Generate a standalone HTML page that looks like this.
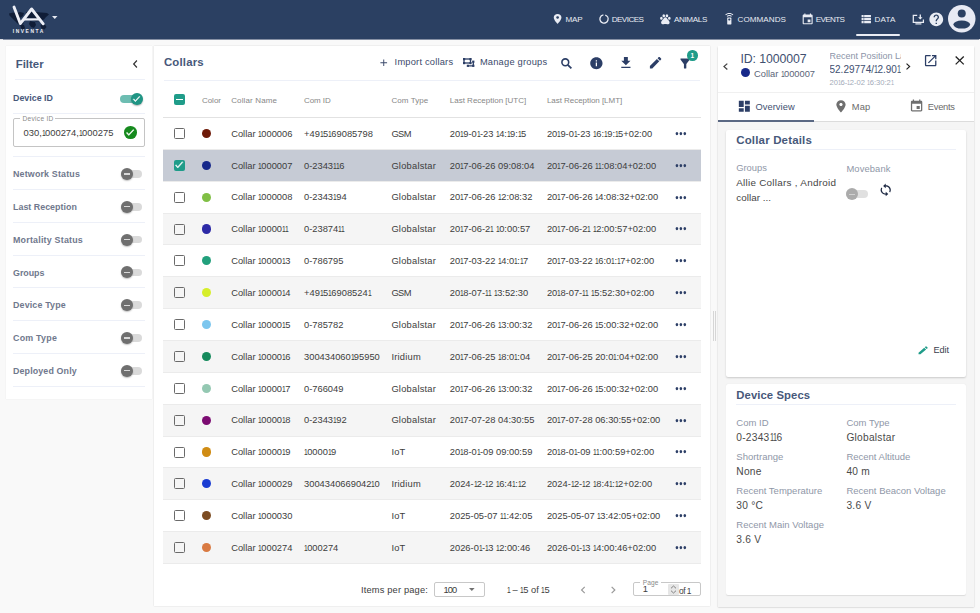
<!DOCTYPE html><html><head><meta charset="utf-8"><style>
html,body{margin:0;padding:0;}
body{width:980px;height:613px;position:relative;overflow:hidden;background:#f9f9f9;font-family:"Liberation Sans",sans-serif;}
.t{position:absolute;white-space:nowrap;line-height:1;}
.i{position:absolute;overflow:visible;}
.r{position:absolute;box-sizing:border-box;}
.o{display:inline-block;width:.338em;}
.o>span{display:inline-block;transform:scaleX(.72);transform-origin:-.02em 0;}
</style></head><body>
<div class="r" style="left:0px;top:0px;width:980px;height:38.6px;background:#2b4062;box-shadow:0 0.6px 0.8px rgba(20,40,80,0.5);"></div>
<svg class="i" style="left:0;top:0;width:70px;height:38px" viewBox="0 0 70 38"><g fill="#0e1a33" opacity="0.9"><path d="M9 13.5 L13 12.5 L17 13 L20 12 L24 13 L23 16 L20 18 L21 21 L24 23 L22 25 L18 24 L15 21 L12 18 L9.5 15.5Z"/><path d="M26 12 L31 11.5 L36 12 L41 12.5 L47 13 L49 14.5 L46 17 L44 19.5 L40 21 L36 21.5 L32 20 L28 19 L26 16Z"/><path d="M20 24 L24 25 L25 28 L23 30.5 L21 28Z"/><path d="M30 21 L35 22 L36 25 L34 28 L31 27 L29 24Z"/><path d="M41 24 L45 24.5 L46.5 27 L44.5 29.5 L41.5 28.5 L40.5 26Z"/></g><path fill="none" stroke="#eceef6" stroke-width="2.9" stroke-linejoin="round" stroke-linecap="round" d="M14 7 L20.3 23.6 L31.6 9 L43.2 23.8"/><path fill="none" stroke="#eceef6" stroke-width="2.2" d="M23.2 19.4 L39.4 19.4"/><polygon fill="#e6e9f2" points="52,16 57.5,16 54.75,19"/></svg>
<div class="t" style="left:12.80px;top:30.45px;font-size:4.9px;color:#eef0f6;font-weight:bold;letter-spacing:1.551px;">INVENTA</div>
<svg class="i" style="left:551.05px;top:13.22px;width:13.20px;height:11.76px;" viewBox="0 0 24 24" preserveAspectRatio="none"><path fill="#e9ecf4"   d="M12 2C8.13 2 5 5.13 5 9c0 5.25 7 13 7 13s7-7.75 7-13c0-3.87-3.13-7-7-7zm0 9.5c-1.38 0-2.5-1.12-2.5-2.5s1.12-2.5 2.5-2.5 2.5 1.12 2.5 2.5-1.12 2.5-2.5 2.5z"/></svg>
<div class="t" style="left:565.60px;top:16.34px;font-size:8.1px;color:#e9ecf4;letter-spacing:-0.284px;">MAP</div>
<svg class="i" style="left:598.7px;top:13.8px;width:10px;height:10px" viewBox="0 0 10 10"><circle cx="5" cy="5" r="4.1" fill="none" stroke="#e9ecf4" stroke-width="1.3" stroke-dasharray="23.2 2.56" transform="rotate(-72 5 5)"/></svg>
<div class="t" style="left:611.70px;top:16.34px;font-size:8.1px;color:#e9ecf4;letter-spacing:-0.537px;">DEVICES</div>
<svg class="i" style="left:659.34px;top:10.57px;width:12.72px;height:14.55px;" viewBox="0 0 24 24" preserveAspectRatio="none"><path fill="#e9ecf4"   d="M4.5 12m-2.5 0a2.5 2.5 0 1 0 5 0 2.5 2.5 0 1 0-5 0M9 8m-2.5 0a2.5 2.5 0 1 0 5 0 2.5 2.5 0 1 0-5 0M15 8m-2.5 0a2.5 2.5 0 1 0 5 0 2.5 2.5 0 1 0-5 0M19.5 12m-2.5 0a2.5 2.5 0 1 0 5 0 2.5 2.5 0 1 0-5 0M17.34 14.86c-.87-1.02-1.6-1.89-2.48-2.91-.46-.54-1.05-1.08-1.75-1.32-.11-.04-.22-.07-.33-.09-.25-.04-.52-.04-.78-.04s-.53 0-.79.05c-.11.02-.22.05-.33.09-.7.24-1.28.78-1.75 1.32-.87 1.02-1.6 1.890-2.48 2.910-1.31 1.31-2.92 2.76-2.62 4.79.29 1.02 1.02 2.03 2.33 2.32.73.15 3.060-.44 5.540-.44h.18c2.48 0 4.81.58 5.54.44 1.31-.29 2.04-1.31 2.33-2.32.31-2.04-1.3-3.49-2.61-4.8z"/></svg>
<div class="t" style="left:673.90px;top:16.34px;font-size:8.1px;color:#e9ecf4;letter-spacing:-0.337px;">ANIMALS</div>
<svg class="i" style="left:723.19px;top:12.90px;width:12.62px;height:11.90px;" viewBox="0 0 24 24" preserveAspectRatio="none"><path fill="#e9ecf4"   d="M15 9H9c-.55 0-1 .45-1 1v12c0 .55.45 1 1 1h6c.55 0 1-.45 1-1V10c0-.55-.45-1-1-1zm-3 6c-1.1 0-2-.9-2-2s.9-2 2-2 2 .9 2 2-.9 2-2 2zM7.05 6.050l1.41 1.41C9.37 6.56 10.62 6 12 6s2.630.56 3.54 1.46l1.41-1.41C15.68 4.78 13.93 4 12 4s-3.68.78-4.95 2.05zM12 0C8.96 0 6.21 1.23 4.22 3.22l1.41 1.41C7.26 3.01 9.51 2 12 2s4.74 1.01 6.36 2.64l1.41-1.41C17.79 1.23 15.04 0 12 0z"/></svg>
<div class="t" style="left:737.60px;top:16.34px;font-size:8.1px;color:#e9ecf4;letter-spacing:0.031px;">COMMANDS</div>
<svg class="i" style="left:801.23px;top:12.66px;width:13.33px;height:12.96px;" viewBox="0 0 24 24" preserveAspectRatio="none"><path fill="#e9ecf4"   d="M17 12h-5v5h5v-5zM16 1v2H8V1H6v2H5c-1.11 0-1.99.9-1.99 2L3 19c0 1.1.89 2 2 2h14c1.1 0 2-.9 2-2V5c0-1.1-.9-2-2-2h-1V1h-2zm3 18H5V8h14v11z"/></svg>
<div class="t" style="left:815.80px;top:16.34px;font-size:8.1px;color:#e9ecf4;letter-spacing:-0.635px;">EVENTS</div>
<svg class="i" style="left:860.43px;top:11.74px;width:12.53px;height:14.23px;" viewBox="0 0 24 24" preserveAspectRatio="none"><path fill="#e9ecf4"   d="M3 14h4v-4H3v4zm0 5h4v-4H3v4zM3 9h4V5H3v4zm5 5h13v-4H8v4zm0 5h13v-4H8v4zM8 5v4h13V5H8z"/></svg>
<div class="t" style="left:874.60px;top:16.34px;font-size:8.1px;color:#e9ecf4;letter-spacing:0.100px;">DATA</div>
<div class="r" style="left:856px;top:34px;width:44px;height:2px;background:#e9ecf4;border-radius:1px;"></div>
<svg class="i" style="left:912px;top:14px;width:13px;height:11px" viewBox="0 0 13 11"><path d="M5.2 1.3 H1.3 V8.3 H11.4 V5.6" fill="none" stroke="#e9ecf4" stroke-width="1.25"/><path d="M3.4 9.9 H9.4" stroke="#e9ecf4" stroke-width="1.2"/><path d="M8.3 0.6 V4.4" stroke="#e9ecf4" stroke-width="1.3"/><path d="M6.1 3.2 L8.3 5.6 L10.5 3.2Z" fill="#e9ecf4"/></svg>
<svg class="i" style="left:928.12px;top:10.92px;width:16.56px;height:16.56px;" viewBox="0 0 24 24" preserveAspectRatio="none"><path fill="#e9ecf4"   d="M12 2C6.48 2 2 6.48 2 12s4.48 10 10 10 10-4.48 10-10S17.52 2 12 2zm1 17h-2v-2h2v2zm2.07-7.75l-.9.92C13.45 12.9 13 13.5 13 15h-2v-.5c0-1.1.45-2.1 1.17-2.83l1.24-1.26c.37-.36.59-.86.59-1.41 0-1.1-.9-2-2-2s-2 .9-2 2H8c0-2.21 1.79-4 4-4s4 1.790 4 4c0 .88-.36 1.68-.93 2.25z"/></svg>
<svg class="i" style="left:947.5px;top:5.4px;width:27.5px;height:27.5px" viewBox="0 0 28 28"><circle cx="14" cy="14" r="14" fill="#e8eaf4"/><circle cx="14" cy="8.6" r="4.1" fill="#2b4062"/><ellipse cx="14" cy="19.9" rx="8.5" ry="4.1" fill="#2b4062"/></svg>
<div class="r" style="left:6px;top:45.8px;width:146.4px;height:352.9px;background:#fff;box-shadow:0 0 1px rgba(0,0,0,0.1);"></div>
<div class="t" style="left:15.70px;top:58.75px;font-size:11.4px;color:#47587a;font-weight:bold;letter-spacing:0.022px;">Filter</div>
<svg class="i" style="left:127.64px;top:55.50px;width:14.57px;height:16.00px;" viewBox="0 0 24 24" preserveAspectRatio="none"><path fill="#333"   d="M15.41 7.41L14 6l-6 6 6 6 1.41-1.41L10.83 12z"/></svg>
<div class="r" style="left:15px;top:79px;width:130px;height:1px;background:#edf0f8;"></div>
<div class="t" style="left:13.00px;top:94.07px;font-size:8.9px;color:#47587a;font-weight:bold;letter-spacing:-0.008px;">Device ID</div>
<div class="r" style="left:120.4px;top:95px;width:17.900000000000006px;height:7.599999999999994px;background:#6dbdb2;border-radius:4px;"></div>
<div class="r" style="left:131px;top:92.8px;width:11.8px;height:11.8px;border-radius:50%;background:#1f9584;box-shadow:0 1px 1.5px rgba(0,0,0,0.3);"></div>
<svg class="i" style="left:132.32px;top:93.75px;width:9.01px;height:9.66px;" viewBox="0 0 24 24" preserveAspectRatio="none"><path fill="#fff"  stroke="#fff" stroke-width="1.2" stroke-linejoin="round" d="M9 16.17L4.83 12l-1.42 1.41L9 19 21 7l-1.41-1.41z"/></svg>
<div class="r" style="left:13px;top:113px;width:132px;height:1px;background:#edf0f8;"></div>
<div class="r" style="left:13px;top:118.4px;width:131.5px;height:28.3px;border:1px solid #c4c4c4;border-radius:2px;"></div>
<div class="r" style="left:20.3px;top:116px;width:34.8px;height:5px;background:#fff;"></div>
<div class="t" style="left:22.60px;top:115.61px;font-size:6.6px;color:#8a8a8a;letter-spacing:0.266px;">Device ID</div>
<div class="t" style="left:23.60px;top:127.64px;font-size:9.4px;color:#3d3d3d;">030,<span class="o"><span>1</span></span>000274,<span class="o"><span>1</span></span>000275</div>
<div class="r" style="left:124px;top:126.4px;width:12.6px;height:12.6px;border-radius:50%;background:#168a1e;"></div>
<svg class="i" style="left:125.17px;top:127.30px;width:10.10px;height:10.74px;" viewBox="0 0 24 24" preserveAspectRatio="none"><path fill="#fff"  stroke="#fff" stroke-width="1.2" stroke-linejoin="round" d="M9 16.17L4.83 12l-1.42 1.41L9 19 21 7l-1.41-1.41z"/></svg>
<div class="r" style="left:13px;top:156px;width:132px;height:1px;background:#edf0f8;"></div>
<div class="t" style="left:13.00px;top:170.27px;font-size:8.9px;color:#70788d;font-weight:bold;letter-spacing:0.173px;">Network Status</div>
<div class="r" style="left:121px;top:170.2px;width:21.19999999999999px;height:7.600000000000023px;background:#dadada;border-radius:4px;"></div>
<div class="r" style="left:120.7px;top:168.0px;width:12px;height:12px;border-radius:50%;background:#6f6f6f;box-shadow:0 1px 1.5px rgba(0,0,0,0.25);"></div>
<div class="r" style="left:123.7px;top:173.4px;width:5.999999999999986px;height:1.1999999999999886px;background:#d8d8d8;"></div>
<div class="r" style="left:13px;top:189px;width:132px;height:1px;background:#edf0f8;"></div>
<div class="t" style="left:13.00px;top:203.07px;font-size:8.9px;color:#70788d;font-weight:bold;letter-spacing:0.015px;">Last Reception</div>
<div class="r" style="left:121px;top:203.0px;width:21.19999999999999px;height:7.600000000000023px;background:#dadada;border-radius:4px;"></div>
<div class="r" style="left:120.7px;top:200.8px;width:12px;height:12px;border-radius:50%;background:#6f6f6f;box-shadow:0 1px 1.5px rgba(0,0,0,0.25);"></div>
<div class="r" style="left:123.7px;top:206.20000000000002px;width:5.999999999999986px;height:1.1999999999999886px;background:#d8d8d8;"></div>
<div class="r" style="left:13px;top:221.8px;width:132px;height:1.0px;background:#edf0f8;"></div>
<div class="t" style="left:13.00px;top:235.87px;font-size:8.9px;color:#70788d;font-weight:bold;letter-spacing:0.215px;">Mortality Status</div>
<div class="r" style="left:121px;top:235.79999999999998px;width:21.19999999999999px;height:7.600000000000023px;background:#dadada;border-radius:4px;"></div>
<div class="r" style="left:120.7px;top:233.6px;width:12px;height:12px;border-radius:50%;background:#6f6f6f;box-shadow:0 1px 1.5px rgba(0,0,0,0.25);"></div>
<div class="r" style="left:123.7px;top:239.0px;width:5.999999999999986px;height:1.1999999999999886px;background:#d8d8d8;"></div>
<div class="r" style="left:13px;top:254.6px;width:132px;height:1.0px;background:#edf0f8;"></div>
<div class="t" style="left:13.00px;top:268.67px;font-size:8.9px;color:#70788d;font-weight:bold;letter-spacing:-0.024px;">Groups</div>
<div class="r" style="left:121px;top:268.59999999999997px;width:21.19999999999999px;height:7.600000000000023px;background:#dadada;border-radius:4px;"></div>
<div class="r" style="left:120.7px;top:266.4px;width:12px;height:12px;border-radius:50%;background:#6f6f6f;box-shadow:0 1px 1.5px rgba(0,0,0,0.25);"></div>
<div class="r" style="left:123.7px;top:271.79999999999995px;width:5.999999999999986px;height:1.2000000000000455px;background:#d8d8d8;"></div>
<div class="r" style="left:13px;top:287.4px;width:132px;height:1.0px;background:#edf0f8;"></div>
<div class="t" style="left:13.00px;top:301.47px;font-size:8.9px;color:#70788d;font-weight:bold;letter-spacing:0.156px;">Device Type</div>
<div class="r" style="left:121px;top:301.4px;width:21.19999999999999px;height:7.600000000000023px;background:#dadada;border-radius:4px;"></div>
<div class="r" style="left:120.7px;top:299.2px;width:12px;height:12px;border-radius:50%;background:#6f6f6f;box-shadow:0 1px 1.5px rgba(0,0,0,0.25);"></div>
<div class="r" style="left:123.7px;top:304.59999999999997px;width:5.999999999999986px;height:1.2000000000000455px;background:#d8d8d8;"></div>
<div class="r" style="left:13px;top:320.2px;width:132px;height:1.0px;background:#edf0f8;"></div>
<div class="t" style="left:13.00px;top:334.27px;font-size:8.9px;color:#70788d;font-weight:bold;letter-spacing:0.230px;">Com Type</div>
<div class="r" style="left:121px;top:334.2px;width:21.19999999999999px;height:7.600000000000023px;background:#dadada;border-radius:4px;"></div>
<div class="r" style="left:120.7px;top:332.0px;width:12px;height:12px;border-radius:50%;background:#6f6f6f;box-shadow:0 1px 1.5px rgba(0,0,0,0.25);"></div>
<div class="r" style="left:123.7px;top:337.4px;width:5.999999999999986px;height:1.2000000000000455px;background:#d8d8d8;"></div>
<div class="r" style="left:13px;top:353px;width:132px;height:1px;background:#edf0f8;"></div>
<div class="t" style="left:13.00px;top:367.07px;font-size:8.9px;color:#70788d;font-weight:bold;letter-spacing:0.130px;">Deployed Only</div>
<div class="r" style="left:121px;top:367.0px;width:21.19999999999999px;height:7.600000000000023px;background:#dadada;border-radius:4px;"></div>
<div class="r" style="left:120.7px;top:364.8px;width:12px;height:12px;border-radius:50%;background:#6f6f6f;box-shadow:0 1px 1.5px rgba(0,0,0,0.25);"></div>
<div class="r" style="left:123.7px;top:370.2px;width:5.999999999999986px;height:1.2000000000000455px;background:#d8d8d8;"></div>
<div class="r" style="left:13px;top:385.8px;width:132px;height:1.0px;background:#edf0f8;"></div>
<div class="r" style="left:153.9px;top:45.8px;width:556.0px;height:560.5px;background:#fff;box-shadow:0 0 1.2px rgba(0,0,0,0.2);"></div>
<div class="t" style="left:163.90px;top:56.75px;font-size:11.4px;color:#47587a;font-weight:bold;letter-spacing:0.193px;">Collars</div>
<svg class="i" style="left:378.31px;top:56.61px;width:11.49px;height:11.49px;" viewBox="0 0 24 24" preserveAspectRatio="none"><path fill="#3b4a6b"   d="M19 13h-6v6h-2v-6H5v-2h6V5h2v6h6v2z"/></svg>
<div class="t" style="left:394.60px;top:57.83px;font-size:9.3px;color:#3b4a6b;letter-spacing:0.206px;">Import collars</div>
<svg class="i" style="left:458px;top:52px;width:24px;height:20px" viewBox="0 0 24 20"><g fill="none" stroke="#2c3e66" stroke-width="1.3"><rect x="6" y="7" width="6.5" height="4"/><path d="M15.3 9.2 V13.8 H9.8"/></g><g fill="#2c3e66"><rect x="5" y="6" width="2.2" height="2.2"/><rect x="11.4" y="6" width="2.2" height="2.2"/><rect x="5" y="10" width="2.2" height="2.2"/><rect x="11.4" y="10" width="2.2" height="2.2"/><rect x="14.2" y="8.6" width="2.2" height="2.2"/><rect x="14.2" y="12.7" width="2.2" height="2.2"/><rect x="8.8" y="12.7" width="2.2" height="2.2"/></g></svg>
<div class="t" style="left:479.90px;top:57.83px;font-size:9.3px;color:#3b4a6b;letter-spacing:0.214px;">Manage groups</div>
<svg class="i" style="left:561.4px;top:57.6px;width:11.2px;height:11px" viewBox="0 0 11.2 11"><circle cx="4.3" cy="4.3" r="3.4" fill="none" stroke="#2c3e66" stroke-width="1.6"/><path d="M6.8 6.8 L10.4 10.3" stroke="#2c3e66" stroke-width="1.8"/></svg>
<svg class="i" style="left:589.27px;top:55.80px;width:14.76px;height:14.40px;" viewBox="0 0 24 24" preserveAspectRatio="none"><path fill="#2c3e66"   d="M12 2C6.48 2 2 6.48 2 12s4.48 10 10 10 10-4.48 10-10S17.52 2 12 2zm1 15h-2v-6h2v6zm0-8h-2V7h2v2z"/></svg>
<svg class="i" style="left:618.31px;top:55.06px;width:15.77px;height:15.53px;" viewBox="0 0 24 24" preserveAspectRatio="none"><path fill="#2c3e66"   d="M19 9h-4V3H9v6H5l7 7 7-7zM5 18v2h14v-2H5z"/></svg>
<svg class="i" style="left:647.70px;top:55.08px;width:15.20px;height:15.33px;" viewBox="0 0 24 24" preserveAspectRatio="none"><path fill="#2c3e66"   d="M3 17.25V21h3.75L17.81 9.94l-3.75-3.75L3 17.25zM20.71 7.04c.39-.39.39-1.02 0-1.41l-2.34-2.34c-.39-.39-1.02-.39-1.41 0l-1.83 1.83 3.75 3.75 1.83-1.83z"/></svg>
<svg class="i" style="left:677.92px;top:55.50px;width:14.25px;height:15.00px;" viewBox="0 0 24 24" preserveAspectRatio="none"><path fill="#2c3e66"   d="M4.25 5.61C6.27 8.2 10 13 10 13v6c0 .55.45 1 1 1h2c.55 0 1-.45 1-1v-6s3.72-4.8 5.74-7.39c.51-.66.04-1.61-.79-1.61H5.04c-.83 0-1.3.95-.79 1.61z"/></svg>
<div class="r" style="left:687.2px;top:50.3px;width:10.4px;height:10.4px;border-radius:50%;background:#1f9c89;"></div>
<div class="t" style="left:690.40px;top:52.70px;font-size:6.5px;color:#fff;font-weight:bold;">1</div>
<div class="r" style="left:164px;top:80px;width:536px;height:1px;background:#edf0f8;"></div>
<div class="r" style="left:174.1px;top:94.3px;width:10.8px;height:11px;border-radius:2px;background:#1f9c89;"></div>
<div class="r" style="left:175.9px;top:99.3px;width:7.199999999999989px;height:1.2000000000000028px;background:#fff;"></div>
<div class="t" style="left:201.90px;top:96.53px;font-size:8px;color:#878787;letter-spacing:-0.003px;">Color</div>
<div class="t" style="left:231.20px;top:96.53px;font-size:8px;color:#878787;letter-spacing:0.131px;">Collar Name</div>
<div class="t" style="left:304.00px;top:96.53px;font-size:8px;color:#878787;letter-spacing:-0.069px;">Com ID</div>
<div class="t" style="left:391.40px;top:96.53px;font-size:8px;color:#878787;letter-spacing:0.086px;">Com Type</div>
<div class="t" style="left:449.80px;top:96.53px;font-size:8px;color:#878787;letter-spacing:-0.004px;">Last Reception [UTC]</div>
<div class="t" style="left:546.90px;top:96.53px;font-size:8px;color:#878787;letter-spacing:-0.037px;">Last Reception [LMT]</div>
<div class="r" style="left:162.5px;top:117px;width:538.5px;height:1px;background:#e2e2e2;"></div>
<div class="r" style="left:162.5px;top:148.86px;width:538.5px;height:1.0px;background:#ebebeb;"></div>
<div class="r" style="left:174.1px;top:127.93px;width:10.8px;height:11px;border-radius:1.5px;border:1.4px solid #6a6a6a;"></div>
<div class="r" style="left:202.2px;top:128.83px;width:9.2px;height:9.2px;border-radius:50%;background:#6e1a08;"></div>
<div class="t" style="left:231.20px;top:129.73px;font-size:9.33px;color:#3d3d3d;">Collar <span class="o"><span>1</span></span>000006</div>
<div class="t" style="left:304.00px;top:129.73px;font-size:9.33px;color:#3d3d3d;">+49<span class="o"><span>1</span></span>5<span class="o"><span>1</span></span>69085798</div>
<div class="t" style="left:391.40px;top:129.73px;font-size:9.33px;color:#3d3d3d;letter-spacing:-0.6px;">GSM</div>
<div class="t" style="left:449.80px;top:129.73px;font-size:9.33px;color:#3d3d3d;">20<span class="o"><span>1</span></span>9-0<span class="o"><span>1</span></span>-23 <span class="o"><span>1</span></span>4:<span class="o"><span>1</span></span>9:<span class="o"><span>1</span></span>5</div>
<div class="t" style="left:546.90px;top:129.73px;font-size:9.33px;color:#3d3d3d;">20<span class="o"><span>1</span></span>9-0<span class="o"><span>1</span></span>-23 <span class="o"><span>1</span></span>6:<span class="o"><span>1</span></span>9:<span class="o"><span>1</span></span>5+02:00</div>
<svg class="i" style="left:673.38px;top:123.83px;width:15.75px;height:19.20px;" viewBox="0 0 24 24" preserveAspectRatio="none"><path fill="#2c3e66"   d="M6 10c-1.1 0-2 .9-2 2s.9 2 2 2 2-.9 2-2-.9-2-2-2zm12 0c-1.1 0-2 .9-2 2s.9 2 2 2 2-.9 2-2-.9-2-2-2zm-6 0c-1.1 0-2 .9-2 2s.9 2 2 2 2-.9 2-2-.9-2-2-2z"/></svg>
<div class="r" style="left:162.5px;top:149.86px;width:538.5px;height:31.360000000000014px;background:#c6cbd5;"></div>
<div class="r" style="left:162.5px;top:180.72000000000003px;width:538.5px;height:1.0px;background:#ebebeb;"></div>
<div class="r" style="left:174.1px;top:159.79px;width:10.8px;height:11px;border-radius:2px;background:#1f9c89;"></div>
<svg class="i" style="left:174.37px;top:159.42px;width:10.10px;height:11.45px;" viewBox="0 0 24 24" preserveAspectRatio="none"><path fill="#fff"  stroke="#fff" stroke-width="1.1" stroke-linejoin="round" d="M9 16.17L4.83 12l-1.42 1.41L9 19 21 7l-1.41-1.41z"/></svg>
<div class="r" style="left:202.2px;top:160.69px;width:9.2px;height:9.2px;border-radius:50%;background:#16288a;"></div>
<div class="t" style="left:231.20px;top:161.59px;font-size:9.33px;color:#3d3d3d;">Collar <span class="o"><span>1</span></span>000007</div>
<div class="t" style="left:304.00px;top:161.59px;font-size:9.33px;color:#3d3d3d;">0-2343<span class="o"><span>1</span></span><span class="o"><span>1</span></span>6</div>
<div class="t" style="left:391.40px;top:161.59px;font-size:9.33px;color:#3d3d3d;letter-spacing:0.22px;">Globalstar</div>
<div class="t" style="left:449.80px;top:161.59px;font-size:9.33px;color:#3d3d3d;">20<span class="o"><span>1</span></span>7-06-26 09:08:04</div>
<div class="t" style="left:546.90px;top:161.59px;font-size:9.33px;color:#3d3d3d;">20<span class="o"><span>1</span></span>7-06-26 <span class="o"><span>1</span></span><span class="o"><span>1</span></span>:08:04+02:00</div>
<svg class="i" style="left:673.38px;top:155.69px;width:15.75px;height:19.20px;" viewBox="0 0 24 24" preserveAspectRatio="none"><path fill="#2c3e66"   d="M6 10c-1.1 0-2 .9-2 2s.9 2 2 2 2-.9 2-2-.9-2-2-2zm12 0c-1.1 0-2 .9-2 2s.9 2 2 2 2-.9 2-2-.9-2-2-2zm-6 0c-1.1 0-2 .9-2 2s.9 2 2 2 2-.9 2-2-.9-2-2-2z"/></svg>
<div class="r" style="left:162.5px;top:212.57999999999998px;width:538.5px;height:1.0px;background:#ebebeb;"></div>
<div class="r" style="left:174.1px;top:191.65px;width:10.8px;height:11px;border-radius:1.5px;border:1.4px solid #6a6a6a;"></div>
<div class="r" style="left:202.2px;top:192.55px;width:9.2px;height:9.2px;border-radius:50%;background:#80bf45;"></div>
<div class="t" style="left:231.20px;top:193.45px;font-size:9.33px;color:#3d3d3d;">Collar <span class="o"><span>1</span></span>000008</div>
<div class="t" style="left:304.00px;top:193.45px;font-size:9.33px;color:#3d3d3d;">0-2343<span class="o"><span>1</span></span>94</div>
<div class="t" style="left:391.40px;top:193.45px;font-size:9.33px;color:#3d3d3d;letter-spacing:0.22px;">Globalstar</div>
<div class="t" style="left:449.80px;top:193.45px;font-size:9.33px;color:#3d3d3d;">20<span class="o"><span>1</span></span>7-06-26 <span class="o"><span>1</span></span>2:08:32</div>
<div class="t" style="left:546.90px;top:193.45px;font-size:9.33px;color:#3d3d3d;">20<span class="o"><span>1</span></span>7-06-26 <span class="o"><span>1</span></span>4:08:32+02:00</div>
<svg class="i" style="left:673.38px;top:187.55px;width:15.75px;height:19.20px;" viewBox="0 0 24 24" preserveAspectRatio="none"><path fill="#2c3e66"   d="M6 10c-1.1 0-2 .9-2 2s.9 2 2 2 2-.9 2-2-.9-2-2-2zm12 0c-1.1 0-2 .9-2 2s.9 2 2 2 2-.9 2-2-.9-2-2-2zm-6 0c-1.1 0-2 .9-2 2s.9 2 2 2 2-.9 2-2-.9-2-2-2z"/></svg>
<div class="r" style="left:162.5px;top:213.57999999999998px;width:538.5px;height:31.360000000000014px;background:#f5f5f5;"></div>
<div class="r" style="left:162.5px;top:244.44px;width:538.5px;height:1.0px;background:#ebebeb;"></div>
<div class="r" style="left:174.1px;top:223.51px;width:10.8px;height:11px;border-radius:1.5px;border:1.4px solid #6a6a6a;"></div>
<div class="r" style="left:202.2px;top:224.41px;width:9.2px;height:9.2px;border-radius:50%;background:#2d2aa6;"></div>
<div class="t" style="left:231.20px;top:225.31px;font-size:9.33px;color:#3d3d3d;">Collar <span class="o"><span>1</span></span>0000<span class="o"><span>1</span></span><span class="o"><span>1</span></span></div>
<div class="t" style="left:304.00px;top:225.31px;font-size:9.33px;color:#3d3d3d;">0-23874<span class="o"><span>1</span></span><span class="o"><span>1</span></span></div>
<div class="t" style="left:391.40px;top:225.31px;font-size:9.33px;color:#3d3d3d;letter-spacing:0.22px;">Globalstar</div>
<div class="t" style="left:449.80px;top:225.31px;font-size:9.33px;color:#3d3d3d;">20<span class="o"><span>1</span></span>7-06-2<span class="o"><span>1</span></span> <span class="o"><span>1</span></span>0:00:57</div>
<div class="t" style="left:546.90px;top:225.31px;font-size:9.33px;color:#3d3d3d;">20<span class="o"><span>1</span></span>7-06-2<span class="o"><span>1</span></span> <span class="o"><span>1</span></span>2:00:57+02:00</div>
<svg class="i" style="left:673.38px;top:219.41px;width:15.75px;height:19.20px;" viewBox="0 0 24 24" preserveAspectRatio="none"><path fill="#2c3e66"   d="M6 10c-1.1 0-2 .9-2 2s.9 2 2 2 2-.9 2-2-.9-2-2-2zm12 0c-1.1 0-2 .9-2 2s.9 2 2 2 2-.9 2-2-.9-2-2-2zm-6 0c-1.1 0-2 .9-2 2s.9 2 2 2 2-.9 2-2-.9-2-2-2z"/></svg>
<div class="r" style="left:162.5px;top:276.3px;width:538.5px;height:1.0px;background:#ebebeb;"></div>
<div class="r" style="left:174.1px;top:255.37px;width:10.8px;height:11px;border-radius:1.5px;border:1.4px solid #6a6a6a;"></div>
<div class="r" style="left:202.2px;top:256.27px;width:9.2px;height:9.2px;border-radius:50%;background:#22a07c;"></div>
<div class="t" style="left:231.20px;top:257.17px;font-size:9.33px;color:#3d3d3d;">Collar <span class="o"><span>1</span></span>0000<span class="o"><span>1</span></span>3</div>
<div class="t" style="left:304.00px;top:257.17px;font-size:9.33px;color:#3d3d3d;">0-786795</div>
<div class="t" style="left:391.40px;top:257.17px;font-size:9.33px;color:#3d3d3d;letter-spacing:0.22px;">Globalstar</div>
<div class="t" style="left:449.80px;top:257.17px;font-size:9.33px;color:#3d3d3d;">20<span class="o"><span>1</span></span>7-03-22 <span class="o"><span>1</span></span>4:0<span class="o"><span>1</span></span>:<span class="o"><span>1</span></span>7</div>
<div class="t" style="left:546.90px;top:257.17px;font-size:9.33px;color:#3d3d3d;">20<span class="o"><span>1</span></span>7-03-22 <span class="o"><span>1</span></span>6:0<span class="o"><span>1</span></span>:<span class="o"><span>1</span></span>7+02:00</div>
<svg class="i" style="left:673.38px;top:251.27px;width:15.75px;height:19.20px;" viewBox="0 0 24 24" preserveAspectRatio="none"><path fill="#2c3e66"   d="M6 10c-1.1 0-2 .9-2 2s.9 2 2 2 2-.9 2-2-.9-2-2-2zm12 0c-1.1 0-2 .9-2 2s.9 2 2 2 2-.9 2-2-.9-2-2-2zm-6 0c-1.1 0-2 .9-2 2s.9 2 2 2 2-.9 2-2-.9-2-2-2z"/></svg>
<div class="r" style="left:162.5px;top:277.3px;width:538.5px;height:31.360000000000014px;background:#f5f5f5;"></div>
<div class="r" style="left:162.5px;top:308.16px;width:538.5px;height:1.0px;background:#ebebeb;"></div>
<div class="r" style="left:174.1px;top:287.23px;width:10.8px;height:11px;border-radius:1.5px;border:1.4px solid #6a6a6a;"></div>
<div class="r" style="left:202.2px;top:288.13px;width:9.2px;height:9.2px;border-radius:50%;background:#d6ee2a;"></div>
<div class="t" style="left:231.20px;top:289.03px;font-size:9.33px;color:#3d3d3d;">Collar <span class="o"><span>1</span></span>0000<span class="o"><span>1</span></span>4</div>
<div class="t" style="left:304.00px;top:289.03px;font-size:9.33px;color:#3d3d3d;">+49<span class="o"><span>1</span></span>5<span class="o"><span>1</span></span>6908524<span class="o"><span>1</span></span></div>
<div class="t" style="left:391.40px;top:289.03px;font-size:9.33px;color:#3d3d3d;letter-spacing:-0.6px;">GSM</div>
<div class="t" style="left:449.80px;top:289.03px;font-size:9.33px;color:#3d3d3d;">20<span class="o"><span>1</span></span>8-07-<span class="o"><span>1</span></span><span class="o"><span>1</span></span> <span class="o"><span>1</span></span>3:52:30</div>
<div class="t" style="left:546.90px;top:289.03px;font-size:9.33px;color:#3d3d3d;">20<span class="o"><span>1</span></span>8-07-<span class="o"><span>1</span></span><span class="o"><span>1</span></span> <span class="o"><span>1</span></span>5:52:30+02:00</div>
<svg class="i" style="left:673.38px;top:283.13px;width:15.75px;height:19.20px;" viewBox="0 0 24 24" preserveAspectRatio="none"><path fill="#2c3e66"   d="M6 10c-1.1 0-2 .9-2 2s.9 2 2 2 2-.9 2-2-.9-2-2-2zm12 0c-1.1 0-2 .9-2 2s.9 2 2 2 2-.9 2-2-.9-2-2-2zm-6 0c-1.1 0-2 .9-2 2s.9 2 2 2 2-.9 2-2-.9-2-2-2z"/></svg>
<div class="r" style="left:162.5px;top:340.02px;width:538.5px;height:1.0px;background:#ebebeb;"></div>
<div class="r" style="left:174.1px;top:319.09px;width:10.8px;height:11px;border-radius:1.5px;border:1.4px solid #6a6a6a;"></div>
<div class="r" style="left:202.2px;top:319.99px;width:9.2px;height:9.2px;border-radius:50%;background:#7cc6ee;"></div>
<div class="t" style="left:231.20px;top:320.89px;font-size:9.33px;color:#3d3d3d;">Collar <span class="o"><span>1</span></span>0000<span class="o"><span>1</span></span>5</div>
<div class="t" style="left:304.00px;top:320.89px;font-size:9.33px;color:#3d3d3d;">0-785782</div>
<div class="t" style="left:391.40px;top:320.89px;font-size:9.33px;color:#3d3d3d;letter-spacing:0.22px;">Globalstar</div>
<div class="t" style="left:449.80px;top:320.89px;font-size:9.33px;color:#3d3d3d;">20<span class="o"><span>1</span></span>7-06-26 <span class="o"><span>1</span></span>3:00:32</div>
<div class="t" style="left:546.90px;top:320.89px;font-size:9.33px;color:#3d3d3d;">20<span class="o"><span>1</span></span>7-06-26 <span class="o"><span>1</span></span>5:00:32+02:00</div>
<svg class="i" style="left:673.38px;top:314.99px;width:15.75px;height:19.20px;" viewBox="0 0 24 24" preserveAspectRatio="none"><path fill="#2c3e66"   d="M6 10c-1.1 0-2 .9-2 2s.9 2 2 2 2-.9 2-2-.9-2-2-2zm12 0c-1.1 0-2 .9-2 2s.9 2 2 2 2-.9 2-2-.9-2-2-2zm-6 0c-1.1 0-2 .9-2 2s.9 2 2 2 2-.9 2-2-.9-2-2-2z"/></svg>
<div class="r" style="left:162.5px;top:341.02px;width:538.5px;height:31.360000000000014px;background:#f5f5f5;"></div>
<div class="r" style="left:162.5px;top:371.88px;width:538.5px;height:1.0px;background:#ebebeb;"></div>
<div class="r" style="left:174.1px;top:350.95px;width:10.8px;height:11px;border-radius:1.5px;border:1.4px solid #6a6a6a;"></div>
<div class="r" style="left:202.2px;top:351.85px;width:9.2px;height:9.2px;border-radius:50%;background:#158a5c;"></div>
<div class="t" style="left:231.20px;top:352.75px;font-size:9.33px;color:#3d3d3d;">Collar <span class="o"><span>1</span></span>0000<span class="o"><span>1</span></span>6</div>
<div class="t" style="left:304.00px;top:352.75px;font-size:9.33px;color:#3d3d3d;">300434060<span class="o"><span>1</span></span>95950</div>
<div class="t" style="left:391.40px;top:352.75px;font-size:9.33px;color:#3d3d3d;letter-spacing:0.22px;">Iridium</div>
<div class="t" style="left:449.80px;top:352.75px;font-size:9.33px;color:#3d3d3d;">20<span class="o"><span>1</span></span>7-06-25 <span class="o"><span>1</span></span>8:0<span class="o"><span>1</span></span>:04</div>
<div class="t" style="left:546.90px;top:352.75px;font-size:9.33px;color:#3d3d3d;">20<span class="o"><span>1</span></span>7-06-25 20:0<span class="o"><span>1</span></span>:04+02:00</div>
<svg class="i" style="left:673.38px;top:346.85px;width:15.75px;height:19.20px;" viewBox="0 0 24 24" preserveAspectRatio="none"><path fill="#2c3e66"   d="M6 10c-1.1 0-2 .9-2 2s.9 2 2 2 2-.9 2-2-.9-2-2-2zm12 0c-1.1 0-2 .9-2 2s.9 2 2 2 2-.9 2-2-.9-2-2-2zm-6 0c-1.1 0-2 .9-2 2s.9 2 2 2 2-.9 2-2-.9-2-2-2z"/></svg>
<div class="r" style="left:162.5px;top:403.74px;width:538.5px;height:1.0px;background:#ebebeb;"></div>
<div class="r" style="left:174.1px;top:382.81px;width:10.8px;height:11px;border-radius:1.5px;border:1.4px solid #6a6a6a;"></div>
<div class="r" style="left:202.2px;top:383.71px;width:9.2px;height:9.2px;border-radius:50%;background:#94c8b2;"></div>
<div class="t" style="left:231.20px;top:384.61px;font-size:9.33px;color:#3d3d3d;">Collar <span class="o"><span>1</span></span>0000<span class="o"><span>1</span></span>7</div>
<div class="t" style="left:304.00px;top:384.61px;font-size:9.33px;color:#3d3d3d;">0-766049</div>
<div class="t" style="left:391.40px;top:384.61px;font-size:9.33px;color:#3d3d3d;letter-spacing:0.22px;">Globalstar</div>
<div class="t" style="left:449.80px;top:384.61px;font-size:9.33px;color:#3d3d3d;">20<span class="o"><span>1</span></span>7-06-26 <span class="o"><span>1</span></span>3:00:32</div>
<div class="t" style="left:546.90px;top:384.61px;font-size:9.33px;color:#3d3d3d;">20<span class="o"><span>1</span></span>7-06-26 <span class="o"><span>1</span></span>5:00:32+02:00</div>
<svg class="i" style="left:673.38px;top:378.71px;width:15.75px;height:19.20px;" viewBox="0 0 24 24" preserveAspectRatio="none"><path fill="#2c3e66"   d="M6 10c-1.1 0-2 .9-2 2s.9 2 2 2 2-.9 2-2-.9-2-2-2zm12 0c-1.1 0-2 .9-2 2s.9 2 2 2 2-.9 2-2-.9-2-2-2zm-6 0c-1.1 0-2 .9-2 2s.9 2 2 2 2-.9 2-2-.9-2-2-2z"/></svg>
<div class="r" style="left:162.5px;top:404.74px;width:538.5px;height:31.360000000000014px;background:#f5f5f5;"></div>
<div class="r" style="left:162.5px;top:435.6px;width:538.5px;height:1.0px;background:#ebebeb;"></div>
<div class="r" style="left:174.1px;top:414.67px;width:10.8px;height:11px;border-radius:1.5px;border:1.4px solid #6a6a6a;"></div>
<div class="r" style="left:202.2px;top:415.57px;width:9.2px;height:9.2px;border-radius:50%;background:#7c0c72;"></div>
<div class="t" style="left:231.20px;top:416.47px;font-size:9.33px;color:#3d3d3d;">Collar <span class="o"><span>1</span></span>0000<span class="o"><span>1</span></span>8</div>
<div class="t" style="left:304.00px;top:416.47px;font-size:9.33px;color:#3d3d3d;">0-2343<span class="o"><span>1</span></span>92</div>
<div class="t" style="left:391.40px;top:416.47px;font-size:9.33px;color:#3d3d3d;letter-spacing:0.22px;">Globalstar</div>
<div class="t" style="left:449.80px;top:416.47px;font-size:9.33px;color:#3d3d3d;">20<span class="o"><span>1</span></span>7-07-28 04:30:55</div>
<div class="t" style="left:546.90px;top:416.47px;font-size:9.33px;color:#3d3d3d;">20<span class="o"><span>1</span></span>7-07-28 06:30:55+02:00</div>
<svg class="i" style="left:673.38px;top:410.57px;width:15.75px;height:19.20px;" viewBox="0 0 24 24" preserveAspectRatio="none"><path fill="#2c3e66"   d="M6 10c-1.1 0-2 .9-2 2s.9 2 2 2 2-.9 2-2-.9-2-2-2zm12 0c-1.1 0-2 .9-2 2s.9 2 2 2 2-.9 2-2-.9-2-2-2zm-6 0c-1.1 0-2 .9-2 2s.9 2 2 2 2-.9 2-2-.9-2-2-2z"/></svg>
<div class="r" style="left:162.5px;top:467.46000000000004px;width:538.5px;height:1.0px;background:#ebebeb;"></div>
<div class="r" style="left:174.1px;top:446.53px;width:10.8px;height:11px;border-radius:1.5px;border:1.4px solid #6a6a6a;"></div>
<div class="r" style="left:202.2px;top:447.43px;width:9.2px;height:9.2px;border-radius:50%;background:#d08c14;"></div>
<div class="t" style="left:231.20px;top:448.33px;font-size:9.33px;color:#3d3d3d;">Collar <span class="o"><span>1</span></span>0000<span class="o"><span>1</span></span>9</div>
<div class="t" style="left:304.00px;top:448.33px;font-size:9.33px;color:#3d3d3d;"><span class="o"><span>1</span></span>0000<span class="o"><span>1</span></span>9</div>
<div class="t" style="left:391.40px;top:448.33px;font-size:9.33px;color:#3d3d3d;letter-spacing:0.22px;">IoT</div>
<div class="t" style="left:449.80px;top:448.33px;font-size:9.33px;color:#3d3d3d;">20<span class="o"><span>1</span></span>8-0<span class="o"><span>1</span></span>-09 09:00:59</div>
<div class="t" style="left:546.90px;top:448.33px;font-size:9.33px;color:#3d3d3d;">20<span class="o"><span>1</span></span>8-0<span class="o"><span>1</span></span>-09 <span class="o"><span>1</span></span><span class="o"><span>1</span></span>:00:59+02:00</div>
<svg class="i" style="left:673.38px;top:442.43px;width:15.75px;height:19.20px;" viewBox="0 0 24 24" preserveAspectRatio="none"><path fill="#2c3e66"   d="M6 10c-1.1 0-2 .9-2 2s.9 2 2 2 2-.9 2-2-.9-2-2-2zm12 0c-1.1 0-2 .9-2 2s.9 2 2 2 2-.9 2-2-.9-2-2-2zm-6 0c-1.1 0-2 .9-2 2s.9 2 2 2 2-.9 2-2-.9-2-2-2z"/></svg>
<div class="r" style="left:162.5px;top:468.46px;width:538.5px;height:31.360000000000014px;background:#f5f5f5;"></div>
<div class="r" style="left:162.5px;top:499.32px;width:538.5px;height:1.0px;background:#ebebeb;"></div>
<div class="r" style="left:174.1px;top:478.39px;width:10.8px;height:11px;border-radius:1.5px;border:1.4px solid #6a6a6a;"></div>
<div class="r" style="left:202.2px;top:479.29px;width:9.2px;height:9.2px;border-radius:50%;background:#1a3cd2;"></div>
<div class="t" style="left:231.20px;top:480.19px;font-size:9.33px;color:#3d3d3d;">Collar <span class="o"><span>1</span></span>000029</div>
<div class="t" style="left:304.00px;top:480.19px;font-size:9.33px;color:#3d3d3d;">3004340669042<span class="o"><span>1</span></span>0</div>
<div class="t" style="left:391.40px;top:480.19px;font-size:9.33px;color:#3d3d3d;letter-spacing:0.22px;">Iridium</div>
<div class="t" style="left:449.80px;top:480.19px;font-size:9.33px;color:#3d3d3d;">2024-<span class="o"><span>1</span></span>2-<span class="o"><span>1</span></span>2 <span class="o"><span>1</span></span>6:4<span class="o"><span>1</span></span>:<span class="o"><span>1</span></span>2</div>
<div class="t" style="left:546.90px;top:480.19px;font-size:9.33px;color:#3d3d3d;">2024-<span class="o"><span>1</span></span>2-<span class="o"><span>1</span></span>2 <span class="o"><span>1</span></span>8:4<span class="o"><span>1</span></span>:<span class="o"><span>1</span></span>2+02:00</div>
<svg class="i" style="left:673.38px;top:474.29px;width:15.75px;height:19.20px;" viewBox="0 0 24 24" preserveAspectRatio="none"><path fill="#2c3e66"   d="M6 10c-1.1 0-2 .9-2 2s.9 2 2 2 2-.9 2-2-.9-2-2-2zm12 0c-1.1 0-2 .9-2 2s.9 2 2 2 2-.9 2-2-.9-2-2-2zm-6 0c-1.1 0-2 .9-2 2s.9 2 2 2 2-.9 2-2-.9-2-2-2z"/></svg>
<div class="r" style="left:162.5px;top:531.18px;width:538.5px;height:1.0px;background:#ebebeb;"></div>
<div class="r" style="left:174.1px;top:510.25px;width:10.8px;height:11px;border-radius:1.5px;border:1.4px solid #6a6a6a;"></div>
<div class="r" style="left:202.2px;top:511.15px;width:9.2px;height:9.2px;border-radius:50%;background:#7c4c22;"></div>
<div class="t" style="left:231.20px;top:512.05px;font-size:9.33px;color:#3d3d3d;">Collar <span class="o"><span>1</span></span>000030</div>
<div class="t" style="left:304.00px;top:512.05px;font-size:9.33px;color:#3d3d3d;"></div>
<div class="t" style="left:391.40px;top:512.05px;font-size:9.33px;color:#3d3d3d;letter-spacing:0.22px;">IoT</div>
<div class="t" style="left:449.80px;top:512.05px;font-size:9.33px;color:#3d3d3d;">2025-05-07 <span class="o"><span>1</span></span><span class="o"><span>1</span></span>:42:05</div>
<div class="t" style="left:546.90px;top:512.05px;font-size:9.33px;color:#3d3d3d;">2025-05-07 <span class="o"><span>1</span></span>3:42:05+02:00</div>
<svg class="i" style="left:673.38px;top:506.15px;width:15.75px;height:19.20px;" viewBox="0 0 24 24" preserveAspectRatio="none"><path fill="#2c3e66"   d="M6 10c-1.1 0-2 .9-2 2s.9 2 2 2 2-.9 2-2-.9-2-2-2zm12 0c-1.1 0-2 .9-2 2s.9 2 2 2 2-.9 2-2-.9-2-2-2zm-6 0c-1.1 0-2 .9-2 2s.9 2 2 2 2-.9 2-2-.9-2-2-2z"/></svg>
<div class="r" style="left:162.5px;top:532.1800000000001px;width:538.5px;height:31.360000000000014px;background:#f5f5f5;"></div>
<div class="r" style="left:162.5px;top:563.0400000000001px;width:538.5px;height:1.0px;background:#ebebeb;"></div>
<div class="r" style="left:174.1px;top:542.11px;width:10.8px;height:11px;border-radius:1.5px;border:1.4px solid #6a6a6a;"></div>
<div class="r" style="left:202.2px;top:543.01px;width:9.2px;height:9.2px;border-radius:50%;background:#d97a42;"></div>
<div class="t" style="left:231.20px;top:543.91px;font-size:9.33px;color:#3d3d3d;">Collar <span class="o"><span>1</span></span>000274</div>
<div class="t" style="left:304.00px;top:543.91px;font-size:9.33px;color:#3d3d3d;"><span class="o"><span>1</span></span>000274</div>
<div class="t" style="left:391.40px;top:543.91px;font-size:9.33px;color:#3d3d3d;letter-spacing:0.22px;">IoT</div>
<div class="t" style="left:449.80px;top:543.91px;font-size:9.33px;color:#3d3d3d;">2026-0<span class="o"><span>1</span></span>-<span class="o"><span>1</span></span>3 <span class="o"><span>1</span></span>2:00:46</div>
<div class="t" style="left:546.90px;top:543.91px;font-size:9.33px;color:#3d3d3d;">2026-0<span class="o"><span>1</span></span>-<span class="o"><span>1</span></span>3 <span class="o"><span>1</span></span>4:00:46+02:00</div>
<svg class="i" style="left:673.38px;top:538.01px;width:15.75px;height:19.20px;" viewBox="0 0 24 24" preserveAspectRatio="none"><path fill="#2c3e66"   d="M6 10c-1.1 0-2 .9-2 2s.9 2 2 2 2-.9 2-2-.9-2-2-2zm12 0c-1.1 0-2 .9-2 2s.9 2 2 2 2-.9 2-2-.9-2-2-2zm-6 0c-1.1 0-2 .9-2 2s.9 2 2 2 2-.9 2-2-.9-2-2-2z"/></svg>
<div class="t" style="left:361.00px;top:585.93px;font-size:9.3px;color:#3d3d3d;letter-spacing:0.159px;">Items per page:</div>
<div class="r" style="left:433.6px;top:582.3px;width:51.1px;height:14.4px;border:1px solid #c8c8c8;border-radius:2px;"></div>
<div class="t" style="left:443.40px;top:585.93px;font-size:9.3px;color:#3d3d3d;letter-spacing:-0.872px;">100</div>
<svg class="i" style="left:469px;top:588px;width:5.6px;height:3px" viewBox="0 0 6 3"><polygon points="0,0 6,0 3,3" fill="#707070"/></svg>
<div class="t" style="left:506.70px;top:585.93px;font-size:9.3px;color:#3d3d3d;"><span class="o"><span>1</span></span> – <span class="o"><span>1</span></span>5 of <span class="o"><span>1</span></span>5</div>
<svg class="i" style="left:576.25px;top:582.50px;width:14.25px;height:14.00px;" viewBox="0 0 24 24" preserveAspectRatio="none"><path fill="#9a9a9a"   d="M15.41 7.41L14 6l-6 6 6 6 1.41-1.41L10.83 12z"/></svg>
<svg class="i" style="left:605.58px;top:582.50px;width:14.57px;height:14.00px;" viewBox="0 0 24 24" preserveAspectRatio="none"><path fill="#9a9a9a"   d="M10 6L8.59 7.41 13.17 12l-4.58 4.59L10 18l6-6z"/></svg>
<div class="r" style="left:632.6px;top:581.7px;width:68.1px;height:14.8px;border:1px solid #c8c8c8;border-radius:2px;"></div>
<div class="r" style="left:640px;top:579px;width:21px;height:5px;background:#fff;"></div>
<div class="t" style="left:642.70px;top:579.61px;font-size:6.6px;color:#8a8a8a;letter-spacing:0.072px;">Page</div>
<div class="t" style="left:642.70px;top:585.33px;font-size:9.3px;color:#3d3d3d;">1</div>
<div class="r" style="left:668px;top:584px;width:10.700000000000045px;height:10.700000000000045px;background:#e6e6e6;border-radius:1px;"></div>
<svg class="i" style="left:670px;top:585px;width:7px;height:9px" viewBox="0 0 7 9"><path d="M1 3.3 L3.5 1 L6 3.3 M1 5.7 L3.5 8 L6 5.7" fill="none" stroke="#777" stroke-width="0.9"/></svg>
<div class="t" style="left:679.00px;top:586.69px;font-size:8.4px;color:#3d3d3d;letter-spacing:-0.502px;">of 1</div>
<div class="r" style="left:713.3px;top:310.6px;width:1.0px;height:30.399999999999977px;background:#d6d6d6;"></div>
<div class="r" style="left:715.3px;top:310.6px;width:1.0px;height:30.399999999999977px;background:#d6d6d6;"></div>
<div class="r" style="left:717.6px;top:45.8px;width:256.4px;height:561.2px;background:#f5f5f5;box-shadow:0 0.6px 1.5px rgba(0,0,0,0.25);"></div>
<div class="r" style="left:717.6px;top:45.8px;width:256.4px;height:75.2px;background:#fff;"></div>
<div class="r" style="left:718px;top:91.5px;width:256px;height:1.0px;background:#f0f0f0;"></div>
<svg class="i" style="left:718.13px;top:60.20px;width:15.22px;height:13.20px;" viewBox="0 0 24 24" preserveAspectRatio="none"><path fill="#444"   d="M15.41 7.41L14 6l-6 6 6 6 1.41-1.41L10.83 12z"/></svg>
<div class="t" style="left:740.40px;top:53.09px;font-size:12.3px;color:#415070;letter-spacing:-0.083px;">ID: 1000007</div>
<div class="r" style="left:740.8px;top:67.9px;width:9.1px;height:9.1px;border-radius:50%;background:#17298a;"></div>
<div class="t" style="left:754.00px;top:69.93px;font-size:9.3px;color:#5b6478;">Collar <span class="o"><span>1</span></span>000007</div>
<div class="t" style="left:829.50px;top:52.38px;font-size:9px;color:#8b94a8;width:71.5px;overflow:hidden;">Recent Position Lat</div>
<div class="t" style="left:829.50px;top:65.23px;font-size:10px;color:#415070;width:71.5px;overflow:hidden;">52.29774/<span class="o"><span>1</span></span>2.90<span class="o"><span>1</span></span>23</div>
<div class="t" style="left:829.50px;top:79.47px;font-size:7.6px;color:#a3aab8;">20<span class="o"><span>1</span></span>6-<span class="o"><span>1</span></span>2-02 <span class="o"><span>1</span></span>6:30:2<span class="o"><span>1</span></span></div>
<svg class="i" style="left:901.10px;top:60.45px;width:14.25px;height:13.00px;" viewBox="0 0 24 24" preserveAspectRatio="none"><path fill="#222"   d="M10 6L8.59 7.41 13.17 12l-4.58 4.59L10 18l6-6z"/></svg>
<svg class="i" style="left:922.58px;top:52.50px;width:15.33px;height:15.20px;" viewBox="0 0 24 24" preserveAspectRatio="none"><path fill="#2c3e66"   d="M19 19H5V5h7V3H5c-1.11 0-2 .9-2 2v14c0 1.1.89 2 2 2h14c1.1 0 2-.9 2-2v-7h-2v7zM14 3v2h3.59l-9.83 9.83 1.41 1.41L19 6.41V10h2V3h-7z"/></svg>
<svg class="i" style="left:952.29px;top:52.69px;width:15.43px;height:14.91px;" viewBox="0 0 24 24" preserveAspectRatio="none"><path fill="#222"   d="M19 6.41L17.59 5 12 10.59 6.41 5 5 6.41 10.59 12 5 17.59 6.41 19 12 13.41 17.590 19 19 17.59 13.41 12z"/></svg>
<svg class="i" style="left:737.07px;top:99.17px;width:14.67px;height:14.67px;" viewBox="0 0 24 24" preserveAspectRatio="none"><path fill="#2c3e66"   d="M3 13h8V3H3v10zm0 8h8v-6H3v6zm10 0h8V11h-8v10zm0-18v6h8V3h-8z"/></svg>
<div class="t" style="left:755.50px;top:102.53px;font-size:9.3px;color:#415070;letter-spacing:0.055px;">Overview</div>
<svg class="i" style="left:832.68px;top:99.17px;width:15.94px;height:14.76px;" viewBox="0 0 24 24" preserveAspectRatio="none"><path fill="#6f6f6f"   d="M12 2C8.13 2 5 5.13 5 9c0 5.25 7 13 7 13s7-7.75 7-13c0-3.87-3.13-7-7-7zm0 9.5c-1.38 0-2.5-1.12-2.5-2.5s1.12-2.5 2.5-2.5 2.5 1.12 2.5 2.5-1.12 2.5-2.5 2.5z"/></svg>
<div class="t" style="left:851.80px;top:102.93px;font-size:9.3px;color:#6a6a6a;letter-spacing:0.137px;">Map</div>
<svg class="i" style="left:908.70px;top:99.41px;width:15.20px;height:14.16px;" viewBox="0 0 24 24" preserveAspectRatio="none"><path fill="#6f6f6f"   d="M17 12h-5v5h5v-5zM16 1v2H8V1H6v2H5c-1.11 0-1.99.9-1.99 2L3 19c0 1.1.89 2 2 2h14c1.1 0 2-.9 2-2V5c0-1.1-.9-2-2-2h-1V1h-2zm3 18H5V8h14v11z"/></svg>
<div class="t" style="left:927.80px;top:102.93px;font-size:9.3px;color:#6a6a6a;letter-spacing:-0.255px;">Events</div>
<div class="r" style="left:718px;top:120.5px;width:256px;height:1.5px;background:#dcdcdc;"></div>
<div class="r" style="left:718px;top:120px;width:96px;height:2px;background:#5a6883;"></div>
<div class="r" style="left:726px;top:130px;width:240px;height:247px;background:#fff;border-radius:2px;box-shadow:0 1px 2px rgba(0,0,0,0.18);"></div>
<div class="t" style="left:736.20px;top:135.27px;font-size:11.5px;color:#47587a;font-weight:bold;letter-spacing:0.165px;">Collar Details</div>
<div class="r" style="left:736px;top:149.3px;width:220px;height:1.0px;background:#edf0f8;"></div>
<div class="t" style="left:736.20px;top:163.34px;font-size:9.4px;color:#8f97a8;letter-spacing:-0.004px;">Groups</div>
<div class="t" style="left:736.20px;top:178.42px;font-size:9.9px;color:#454545;letter-spacing:0.270px;">Allie Collars , Android</div>
<div class="t" style="left:736.20px;top:192.92px;font-size:9.9px;color:#454545;letter-spacing:0.034px;">collar ...</div>
<div class="t" style="left:846.40px;top:163.94px;font-size:9.4px;color:#8f97a8;letter-spacing:0.117px;">Movebank</div>
<div class="r" style="left:846px;top:190px;width:22px;height:8px;background:#e0e0e0;border-radius:4px;"></div>
<div class="r" style="left:846px;top:188px;width:12px;height:12px;border-radius:50%;background:#ababab;"></div>
<div class="r" style="left:849px;top:193.5px;width:6px;height:1.0px;background:#d0d0d0;"></div>
<svg class="i" style="left:877.82px;top:182.72px;width:15.45px;height:13.96px;" viewBox="0 0 24 24" preserveAspectRatio="none"><path fill="#1f2a44"   d="M12 4V1L8 5l4 4V6c3.31 0 6 2.69 6 6 0 1.01-.25 1.97-.7 2.8l1.46 1.46C19.54 15.03 20 13.57 20 12c0-4.42-3.58-8-8-8zm0 14c-3.31 0-6-2.69-6-6 0-1.01.25-1.97.7-2.8L5.24 7.74C4.46 8.97 4 10.43 4 12c0 4.42 3.58 8 8 8v3l4-4-4-4v3z"/></svg>
<svg class="i" style="left:916.97px;top:344.57px;width:12.27px;height:10.67px;" viewBox="0 0 24 24" preserveAspectRatio="none"><path fill="#1f9c89"   d="M3 17.25V21h3.75L17.81 9.94l-3.75-3.75L3 17.25zM20.71 7.04c.39-.39.39-1.02 0-1.41l-2.34-2.34c-.39-.39-1.02-.39-1.41 0l-1.83 1.83 3.75 3.75 1.83-1.83z"/></svg>
<div class="t" style="left:933.60px;top:346.41px;font-size:9.2px;color:#3a3f50;letter-spacing:-0.113px;">Edit</div>
<div class="r" style="left:726px;top:383.6px;width:240px;height:211.39999999999998px;background:#fff;border-radius:2px;box-shadow:0 0.5px 1px rgba(0,0,0,0.1);"></div>
<div class="t" style="left:736.30px;top:389.63px;font-size:11.3px;color:#47587a;font-weight:bold;letter-spacing:0.086px;">Device Specs</div>
<div class="r" style="left:736px;top:403.6px;width:220px;height:1.0px;background:#edf0f8;"></div>
<div class="t" style="left:736.30px;top:418.16px;font-size:9.5px;color:#8f97a8;">Com ID</div>
<div class="t" style="left:736.30px;top:432.57px;font-size:10.2px;color:#4a4a4a;letter-spacing:0.25px;">0-2343<span class="o"><span>1</span></span><span class="o"><span>1</span></span>6</div>
<div class="t" style="left:846.40px;top:418.16px;font-size:9.5px;color:#8f97a8;">Com Type</div>
<div class="t" style="left:846.40px;top:432.57px;font-size:10.2px;color:#4a4a4a;letter-spacing:0.25px;">Globalstar</div>
<div class="t" style="left:736.30px;top:452.16px;font-size:9.5px;color:#8f97a8;">Shortrange</div>
<div class="t" style="left:736.30px;top:466.57px;font-size:10.2px;color:#4a4a4a;letter-spacing:0.25px;">None</div>
<div class="t" style="left:846.40px;top:452.16px;font-size:9.5px;color:#8f97a8;">Recent Altitude</div>
<div class="t" style="left:846.40px;top:466.57px;font-size:10.2px;color:#4a4a4a;letter-spacing:0.25px;">40 m</div>
<div class="t" style="left:736.30px;top:486.16px;font-size:9.5px;color:#8f97a8;">Recent Temperature</div>
<div class="t" style="left:736.30px;top:500.57px;font-size:10.2px;color:#4a4a4a;letter-spacing:0.25px;">30 °C</div>
<div class="t" style="left:846.40px;top:486.16px;font-size:9.5px;color:#8f97a8;">Recent Beacon Voltage</div>
<div class="t" style="left:846.40px;top:500.57px;font-size:10.2px;color:#4a4a4a;letter-spacing:0.25px;">3.6 V</div>
<div class="t" style="left:736.30px;top:520.16px;font-size:9.5px;color:#8f97a8;">Recent Main Voltage</div>
<div class="t" style="left:736.30px;top:534.57px;font-size:10.2px;color:#4a4a4a;letter-spacing:0.25px;">3.6 V</div>
</body></html>
